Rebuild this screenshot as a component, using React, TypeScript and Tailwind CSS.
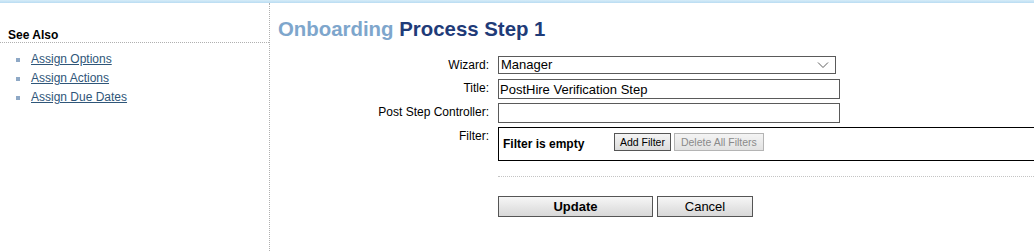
import { useState } from "react";

const links = ["Assign Options", "Assign Actions", "Assign Due Dates"];

export default function App() {
  const [title, setTitle] = useState("PostHire Verification Step");

  return (
    <div className="h-[251px] w-[1034px] overflow-hidden bg-white font-['Liberation_Sans',Arial,sans-serif] text-[12px] text-black">
      {/* top strip */}
      <div className="h-[3px] bg-gradient-to-b from-[#d6ecf8] to-[#b9dcf2]" />

      <div className="flex h-[248px]">
        {/* Sidebar */}
        <aside className="w-[270px] shrink-0 border-r border-dotted border-[#b0b0b0]">
          <div className="mt-[25px] border-b border-dotted border-[#b0b0b0] pb-[0px] pl-[8px] text-[12px] font-bold leading-[14px]">
            See Also
          </div>
          <ul className="mt-[9px] space-y-[4px]">
            {links.map((l) => (
              <li key={l} className="flex h-[15px] items-center pl-[16px]">
                <span className="mr-[11px] h-[4px] w-[4px] bg-[#8fa9c6]" />
                <a href="#" className="leading-[15px] text-[#2f5679] underline">
                  {l}
                </a>
              </li>
            ))}
          </ul>
        </aside>

        {/* Main */}
        <main className="flex-1 pt-[14px]">
          <h1 className="pl-[8px] text-[20.4px] font-bold leading-[24px]">
            <span className="text-[#7ea6cc]">Onboarding</span>{" "}
            <span className="text-[#1f3b78]">Process Step 1</span>
          </h1>

          <div className="mt-[15px] grid grid-cols-[219px_1fr] gap-x-[9px]">
            <label className="pt-[1px] text-right leading-[16px]">Wizard:</label>
            <div className="flex h-[18px] w-[338px] items-center justify-between border border-[#5a5a5a] pl-[2px] pr-[6px] text-[13px]">
              <span>Manager</span>
              <svg width="12" height="8" viewBox="0 0 12 8" fill="none">
                <path d="M1 1.5 L6 6.5 L11 1.5" stroke="#606060" strokeWidth="1" />
              </svg>
            </div>

            <label className="mt-[5px] pt-[1px] text-right leading-[16px]">Title:</label>
            <input
              value={title}
              onChange={(e) => setTitle(e.target.value)}
              className="mt-[5px] h-[20px] w-[342px] border border-[#5a5a5a] px-[1px] text-[13px] outline-none"
            />

            <label className="mt-[4px] pt-[1px] text-right leading-[16px]">Post Step Controller:</label>
            <input className="mt-[4px] h-[20px] w-[342px] border border-[#5a5a5a] px-[1px] text-[13px] outline-none" />

            <label className="mt-[4px] pt-[1px] text-right leading-[16px]">Filter:</label>
            <div className="mt-[4px] flex h-[34px] items-start border border-r-0 border-black pl-[4px] pt-[5px]">
              <span className="mt-[2px] w-[111px] font-bold">Filter is empty</span>
              <button className="h-[18px] border border-[#555] bg-gradient-to-b from-[#f4f4f4] to-[#dcdcdc] px-[5px] text-[10.5px] leading-[14px]">
                Add Filter
              </button>
              <button className="ml-[3px] h-[18px] border border-[#b4b4b4] bg-gradient-to-b from-[#f4f4f4] to-[#e2e2e2] px-[6px] text-[10.5px] leading-[14px] text-[#8a8a8a]">
                Delete All Filters
              </button>
            </div>

            <div />
            <div className="mt-[15px] border-t border-dotted border-[#c4c4c4]" />

            <div />
            <div className="mt-[19px] flex gap-[4px]">
              <button className="h-[21px] w-[155px] border border-[#555] bg-gradient-to-b from-[#f6f6f6] to-[#d8d8d8] text-[13px] font-bold leading-[16px]">
                Update
              </button>
              <button className="h-[21px] w-[96px] border border-[#555] bg-gradient-to-b from-[#f6f6f6] to-[#d8d8d8] text-[13px] leading-[16px]">
                Cancel
              </button>
            </div>
          </div>
        </main>
      </div>
    </div>
  );
}
